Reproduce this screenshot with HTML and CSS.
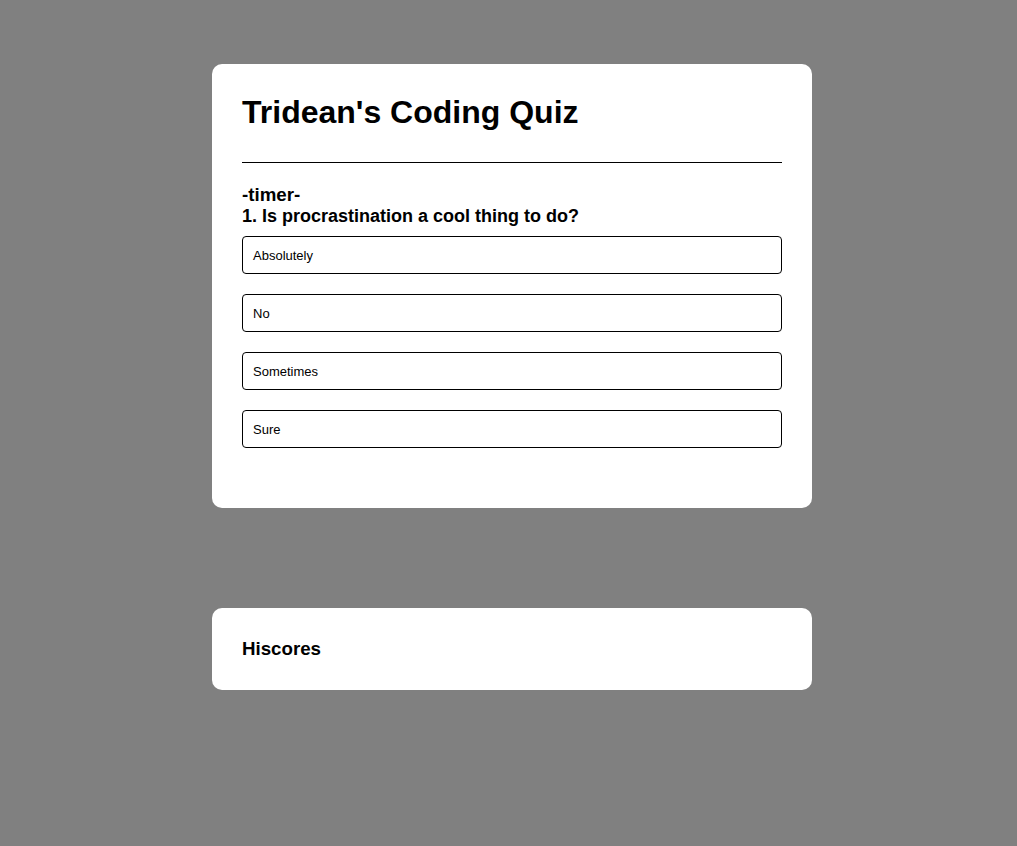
FILE: index.html
```html
<!DOCTYPE html>
<html>
<head>
<meta charset="utf-8">
<title>Tridean's Coding Quiz</title>
<link rel="stylesheet" href="styles.css">
</head>
<body>
<main class="page">
  <section class="card quiz">
    <h1 class="title">Tridean's Coding Quiz</h1>
    <div class="rule"></div>
    <h3 class="timer">-timer-</h3>
    <h3 class="question">1. Is procrastination a cool thing to do?</h3>
    <div class="answers">
      <button class="answer">Absolutely</button>
      <button class="answer">No</button>
      <button class="answer">Sometimes</button>
      <button class="answer">Sure</button>
    </div>
  </section>
  <section class="card scores">
    <h3 class="scores-title">Hiscores</h3>
  </section>
</main>
</body>
</html>
```

FILE: styles.css
```css
html, body {
  margin: 0;
  padding: 0;
}
body {
  background: #808080;
  font-family: "Liberation Sans", Arial, sans-serif;
  color: #000;
}
.page {
  display: flex;
  flex-direction: column;
  align-items: center;
  gap: 100px;
  padding: 64px 0 0 7px;
}
.card {
  box-sizing: border-box;
  width: 600px;
  background: #fff;
  border-radius: 10px;
  padding: 30px;
}
.title {
  margin: 0;
  font-size: 32px;
  font-weight: bold;
}
.rule {
  border-top: 1px solid #000;
  margin-top: 31px;
  margin-bottom: 21px;
}
.timer,
.question,
.scores-title {
  margin: 0;
  font-size: 18.72px;
  font-weight: bold;
}
.question {
  font-size: 18px;
}
.answers {
  display: flex;
  flex-direction: column;
  gap: 20px;
  margin-top: 9px;
  padding-bottom: 30px;
}
.answer {
  box-sizing: border-box;
  height: 38px;
  width: 100%;
  text-align: left;
  background: #fff;
  border: 1px solid #000;
  border-radius: 4px;
  padding: 0 10px;
  font-family: "Liberation Sans", Arial, sans-serif;
  font-size: 13px;
  color: #000;
}
```
